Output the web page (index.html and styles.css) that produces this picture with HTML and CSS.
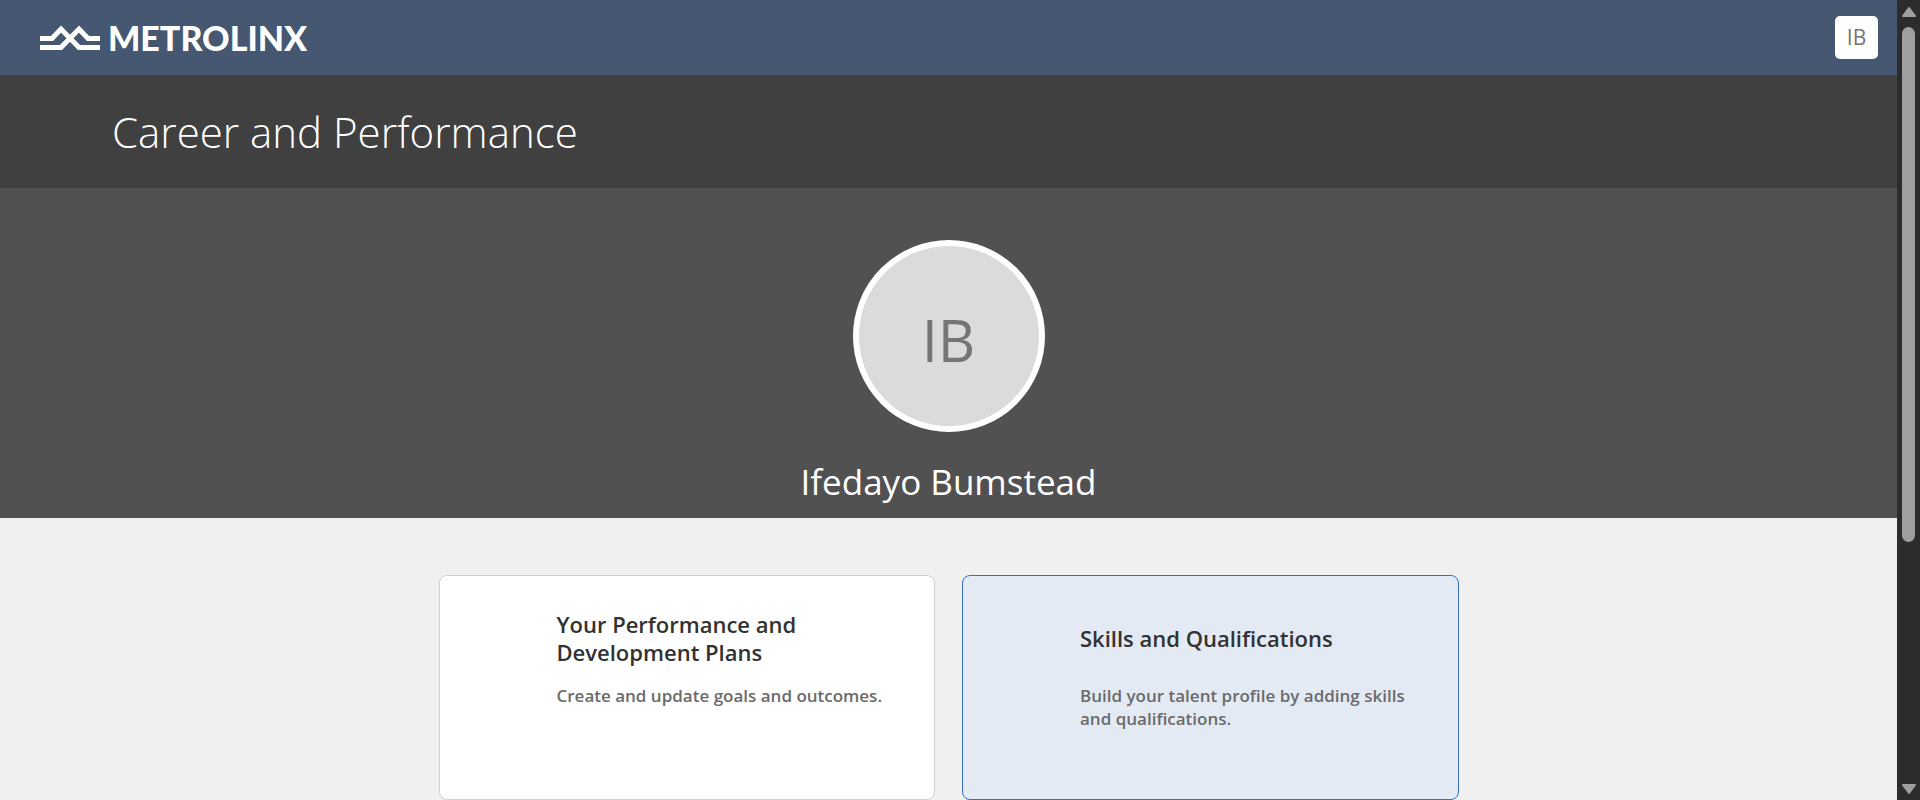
FILE: index.html
```html
<!DOCTYPE html>
<html lang="en">
<head>
<meta charset="utf-8">
<meta name="viewport" content="width=device-width, initial-scale=1">
<title>Career and Performance</title>
<link rel="stylesheet" href="styles.css">
</head>
<body>
<div class="page">
  <header class="topbar">
    <a class="brand" href="#" aria-label="Metrolinx home">
      <svg class="brand-mark" viewBox="0 0 62 26" fill="none" stroke="currentColor" stroke-width="5" aria-hidden="true">
        <path d="M1 13.500H13L22 4L40 22.500H61"/>
        <path d="M1 22.500H22L40 4L49 13.500H61"/>
      </svg>
      <span class="brand-name">METROLINX</span>
    </a>
    <button class="user-button" type="button" aria-label="IB account menu">IB</button>
  </header>
  <div class="title-bar"><h1 class="page-title">Career and Performance</h1></div>
  <section class="profile">
    <div class="avatar">IB</div>
    <h2 class="profile-name">Ifedayo Bumstead</h2>
  </section>
  <main class="cards">
    <a class="card" href="#">
      <h3 class="card-title">Your Performance and Development Plans</h3>
      <p class="card-text">Create and update goals and outcomes.</p>
    </a>
    <a class="card card-active" href="#">
      <h3 class="card-title">Skills and Qualifications</h3>
      <p class="card-text">Build your talent profile by adding skills and qualifications.</p>
    </a>
  </main>
</div>
<div class="scrollbar" aria-hidden="true">
  <svg class="scroll-arrow" viewBox="0 0 16 12"><path d="M8 2L14 10H2Z"/></svg>
  <div class="scroll-track"><div class="scroll-thumb"></div></div>
  <svg class="scroll-arrow" viewBox="0 0 16 12"><path d="M2 2H14L8 10Z"/></svg>
</div>
</body>
</html>
```
FILE: styles.css
```css
* { box-sizing: border-box; }

body {
  margin: 0;
  height: 100vh;
  display: grid;
  grid-template-columns: 1fr 23px;
  overflow: hidden;
  font-family: "Open Sans", "Noto Sans", sans-serif;
  background: #f0f0f0;
}

h1, h2, h3, p { margin: 0; }
a { color: inherit; text-decoration: none; }

.page { min-width: 0; overflow: hidden; }

.topbar {
  display: flex;
  align-items: center;
  justify-content: space-between;
  height: 75px;
  padding: 0 19px 0 39px;
  background: #465772;
  color: #fff;
}

.brand { display: flex; align-items: center; gap: 7px; }
.brand-mark { width: 62px; height: 26px; }
.brand-name { font: 900 34px/40px Lato, sans-serif; }

.user-button {
  width: 43px;
  height: 43px;
  padding: 0;
  border: 0;
  border-radius: 5px;
  background: #fff;
  color: #757575;
  font: 400 21px/43px "Open Sans", sans-serif;
}

.title-bar {
  display: flex;
  align-items: center;
  height: 113px;
  padding: 0 112px;
  background: #404040;
  color: #fff;
}
.page-title { font-size: 42px; font-weight: 300; line-height: 60px; }

.profile {
  display: flex;
  flex-direction: column;
  align-items: center;
  gap: 24px;
  height: 330px;
  padding-top: 52px;
  background: #515151;
  color: #fff;
}

.avatar {
  display: flex;
  align-items: center;
  justify-content: center;
  width: 192px;
  height: 192px;
  padding-top: 6px;
  border: 6px solid #fff;
  border-radius: 50%;
  background: #dbdbdb;
  color: #757575;
  font-size: 58px;
}

.profile-name { font-size: 35px; font-weight: 400; line-height: 52px; }

.cards {
  display: grid;
  grid-template-columns: 1fr 1fr;
  gap: 27px;
  max-width: 1020px;
  margin: 57px auto 0;
}

.card {
  min-height: 225px;
  padding: 34px 48px 24px 117px;
  border: 1px solid #cfcfcf;
  border-radius: 8px;
  background: #fff;
  color: #323232;
}
.card-active { border-color: #3a6fb9; background: #e4eaf4; }

.card-title {
  display: flex;
  align-items: center;
  min-height: 56px;
  font-size: 22px;
  font-weight: 600;
  line-height: 28px;
}

.card-text {
  margin-top: 18px;
  color: #6a6a6a;
  font-size: 17px;
  font-weight: 600;
  line-height: 23px;
}

.scrollbar {
  display: flex;
  flex-direction: column;
  align-items: center;
  padding: 5px 0 4px;
  background: #2c2c2c;
}
.scroll-arrow {
  width: 16px;
  height: 14px;
  fill: #9f9f9f;
  stroke: #9f9f9f;
  stroke-width: 2;
  stroke-linejoin: round;
}
.scroll-track { flex: 1; padding: 8px 0 9px; }
.scroll-thumb { width: 13px; height: 69%; border-radius: 7px; background: #9f9f9f; }
```
